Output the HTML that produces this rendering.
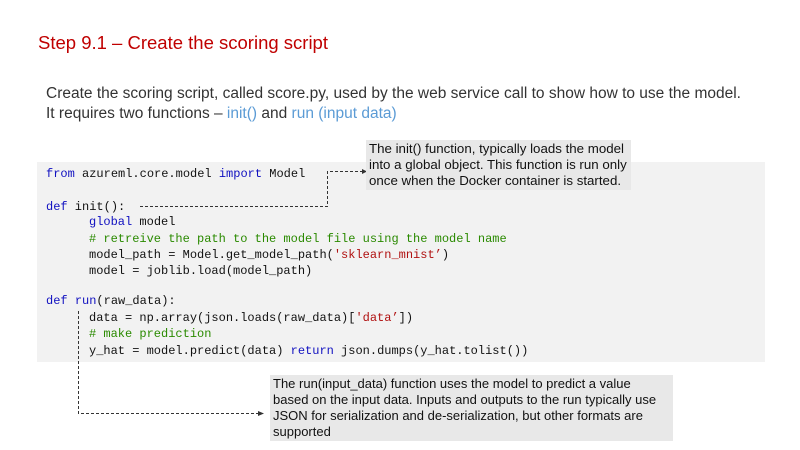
<!DOCTYPE html>
<html><head><meta charset="utf-8"><style>
body{margin:0;width:800px;height:450px;background:#fff;position:relative;overflow:hidden;font-family:"Liberation Sans",sans-serif}
.t{position:absolute;left:38px;top:32px;font-size:18.5px;color:#c00000;letter-spacing:0px}
.p{position:absolute;left:46px;font-size:15.5px;color:#333;letter-spacing:0px;white-space:nowrap}
.b{color:#5b9bd5}
.code{position:absolute;left:37px;top:162px;width:728px;height:200px;background:#f2f2f2}
.l{position:absolute;font-family:"Liberation Mono",monospace;font-size:12px;color:#111;white-space:pre}
.k{color:#1010c0}.c{color:#2a8a00}.s{color:#b01010}
.co{position:absolute;background:#e8e8e8;color:#111;line-height:16px;padding:1px 3px}
</style></head><body>
<div class="t">Step 9.1 – Create the scoring script</div>
<div class="p" style="top:85px">Create the scoring script, called score.py, used by the web service call to show how to use the model.</div>
<div class="p" style="top:105px">It requires two functions – <span class="b">init()</span> and <span class="b">run (input data)</span></div>
<div class="code"></div>
<div class="l" style="left:46px;top:167px"><span class="k">from</span> azureml.core.model <span class="k">import</span> Model</div>
<div class="l" style="left:46px;top:200px"><span class="k">def</span> init():</div>
<div class="l" style="left:89px;top:215px"><span class="k">global</span> model</div>
<div class="l" style="left:89px;top:232px"><span class="c"># retreive the path to the model file using the model name</span></div>
<div class="l" style="left:89px;top:248px">model_path = Model.get_model_path(<span class="s">'sklearn_mnist’</span>)</div>
<div class="l" style="left:89px;top:264px">model = joblib.load(model_path)</div>
<div class="l" style="left:46px;top:294px"><span class="k">def</span> <span class="k">run</span>(raw_data):</div>
<div class="l" style="left:89px;top:311px">data = np.array(json.loads(raw_data)[<span class="s">'data’</span>])</div>
<div class="l" style="left:89px;top:327px"><span class="c"># make prediction</span></div>
<div class="l" style="left:89px;top:344px">y_hat = model.predict(data) <span class="k">return</span> json.dumps(y_hat.tolist())</div>
<svg style="position:absolute;left:0;top:0" width="800" height="450">
<g stroke="#333" stroke-width="1" stroke-dasharray="3,2" fill="none">
<path d="M140 206.5H327.5V171.5H362"/>
<path d="M78.5 311V413.5H258"/>
</g>
<path d="M362 169L367 171.5L362 174Z" fill="#333"/>
<path d="M258 411L264 413.5L258 416Z" fill="#333"/>
</svg>
<div class="co" style="left:366px;top:140px;width:259px;font-size:13.3px">The init() function, typically loads the model into a global object. This function is run only once when the Docker container is started.</div>
<div class="co" style="left:270px;top:375px;width:397px;height:64px;font-size:13px"><div style="width:390px">The run(input_data) function uses the model to predict a value based on the input data. Inputs and outputs to the run typically use JSON for serialization and de-serialization, but other formats are supported</div></div>
</body></html>
